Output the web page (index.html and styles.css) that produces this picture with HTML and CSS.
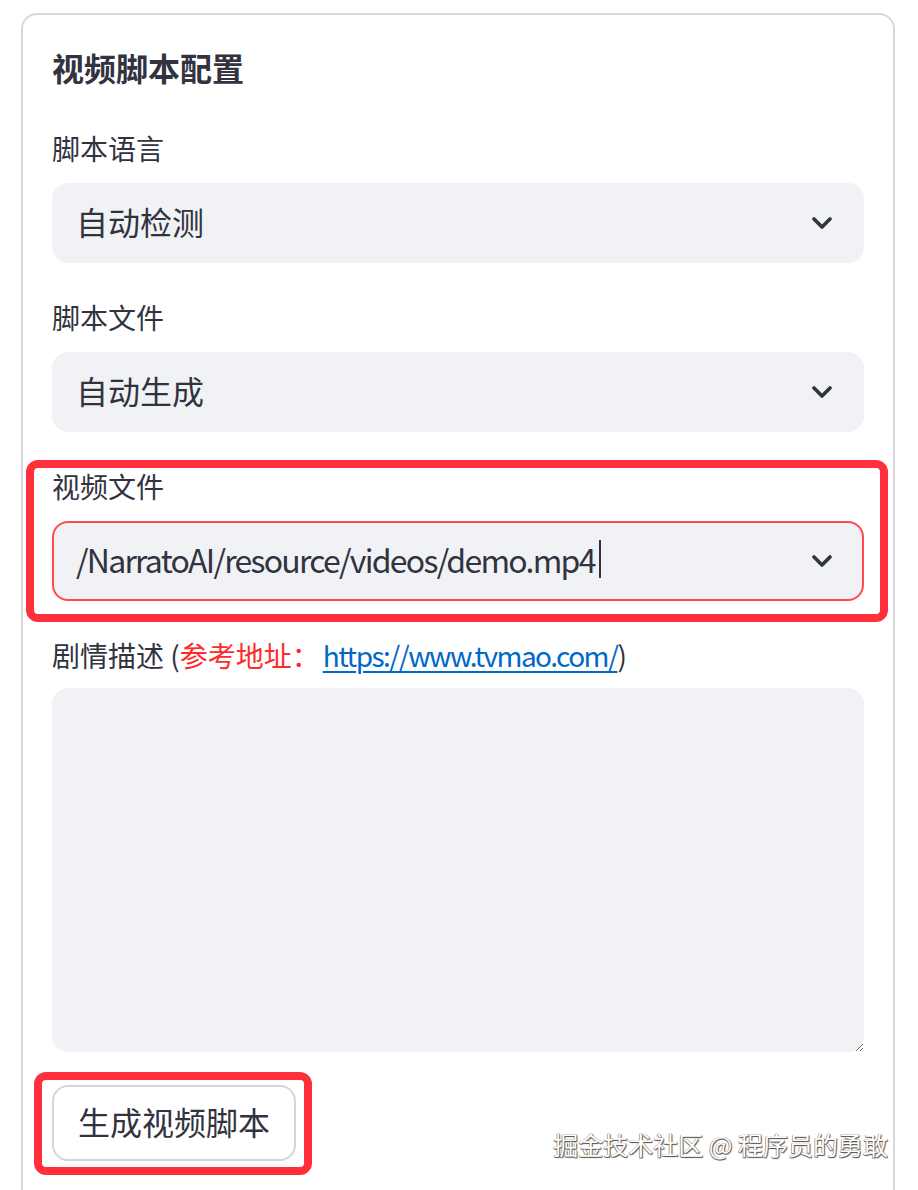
FILE: index.html
```html
<!DOCTYPE html>
<html lang="zh-CN">
<head>
<meta charset="utf-8">
<title>视频脚本配置</title>
<link rel="stylesheet" href="styles.css">
</head>
<body>
<div class="page">
  <section class="card">
    <h2 class="title">视频脚本配置</h2>

    <div class="field">
      <label class="label">脚本语言</label>
      <div class="select">
        <span class="value">自动检测</span>
        <svg class="chev" viewBox="0 0 20 12" width="20" height="12"><polyline points="2,2 10,10 18,2" fill="none" stroke="#31333f" stroke-width="3.6" stroke-linecap="round" stroke-linejoin="round"/></svg>
      </div>
    </div>

    <div class="field">
      <label class="label">脚本文件</label>
      <div class="select">
        <span class="value">自动生成</span>
        <svg class="chev" viewBox="0 0 20 12" width="20" height="12"><polyline points="2,2 10,10 18,2" fill="none" stroke="#31333f" stroke-width="3.6" stroke-linecap="round" stroke-linejoin="round"/></svg>
      </div>
    </div>

    <div class="field">
      <label class="label">视频文件</label>
      <div class="select focused">
        <span class="value"><span class="latin">/NarratoAI/resource/videos/demo.mp4</span><span class="caret"></span></span>
        <svg class="chev" viewBox="0 0 20 12" width="20" height="12"><polyline points="2,2 10,10 18,2" fill="none" stroke="#31333f" stroke-width="3.6" stroke-linecap="round" stroke-linejoin="round"/></svg>
      </div>
    </div>

    <div class="field last">
      <label class="label">剧情描述 (<span class="red">参考地址：</span><a class="link latin" href="#">https://www.tvmao.com/</a>)</label>
      <textarea class="area"></textarea>
    </div>

    <button class="btn" type="button">生成视频脚本</button>
  </section>

  <div class="mark mark-file"></div>
  <div class="mark mark-btn"></div>
  <div class="watermark">掘金技术社区 @ 程序员的勇敢</div>
</div>
</body>
</html>
```

FILE: styles.css
```css
html, body {
  margin: 0;
  padding: 0;
  height: 100%;
  overflow: hidden;
  background: #ffffff;
}

body {
  font-family: "Noto Sans CJK SC", "Noto Sans", sans-serif;
  color: #31333f;
}

.page {
  position: relative;
  width: 918px;
  height: 1190px;
  overflow: hidden;
}

.card {
  box-sizing: border-box;
  margin: 13px 0 0 21px;
  width: 874px;
  height: 1300px;
  border: 2px solid #d8d8db;
  border-radius: 16px;
  padding: 32px 29px 0 29px;
  display: flex;
  flex-direction: column;
  align-items: flex-start;
}

.title {
  margin: 0 0 43px 0;
  font-size: 32px;
  line-height: 40px;
  font-weight: 700;
  color: #31333f;
}

.field {
  width: 100%;
  display: flex;
  flex-direction: column;
  margin-bottom: 36px;
}

.field.last {
  margin-bottom: 33px;
}

.label {
  box-sizing: border-box;
  font-size: 28px;
  line-height: 36px;
  height: 40px;
  padding-bottom: 4px;
  margin-bottom: 13px;
  color: #31333f;
  white-space: nowrap;
}

.field.last .label {
  margin-bottom: 11px;
}

.latin {
  letter-spacing: -0.055em;
}

.red {
  color: #ff2b2b;
}

.link {
  color: #0068c9;
  text-decoration: underline;
  text-underline-offset: 4px;
  text-decoration-thickness: 2px;
  margin-left: 3px;
}

.select {
  box-sizing: border-box;
  width: 100%;
  height: 80px;
  background: #f0f2f6;
  border: 2px solid #f0f2f6;
  border-radius: 16px;
  display: flex;
  align-items: center;
  justify-content: space-between;
  padding: 0 30px 0 22px;
}

.select.focused {
  border-color: #ff4b4b;
}

.value {
  font-size: 32px;
  line-height: 40px;
  padding-bottom: 5px;
  color: #31333f;
  display: flex;
  align-items: center;
}

.caret {
  display: inline-block;
  width: 2px;
  height: 38px;
  background: #31333f;
  margin-left: 4px;
}

.chev {
  display: block;
  flex: none;
}

.area {
  box-sizing: border-box;
  width: 100%;
  height: 364px;
  background: #f0f2f6;
  border: none;
  border-radius: 16px;
  outline: none;
  resize: vertical;
  margin: 0;
  font-family: inherit;
}

.btn {
  box-sizing: border-box;
  width: 244px;
  height: 76px;
  background: #ffffff;
  border: 2px solid #d5d6da;
  border-radius: 16px;
  font-family: inherit;
  font-size: 32px;
  line-height: 40px;
  color: #31333f;
  padding: 0 0 5px 0;
  margin: 0;
}

.mark {
  position: absolute;
  box-sizing: border-box;
  border: 8px solid #ff2f3b;
  border-radius: 12px;
}

.mark-file {
  left: 26px;
  top: 460px;
  width: 862px;
  height: 162px;
}

.mark-btn {
  left: 34px;
  top: 1072px;
  width: 278px;
  height: 103px;
}

.watermark {
  position: absolute;
  right: 30px;
  top: 1128px;
  font-size: 25px;
  line-height: 32px;
  color: #ffffff;
  text-shadow: 1px 1px 1px #555555, -0.5px -0.5px 0 #8a8a8a, 0.5px -0.5px 0 #8a8a8a, -0.5px 0.5px 0 #8a8a8a;
}
```
